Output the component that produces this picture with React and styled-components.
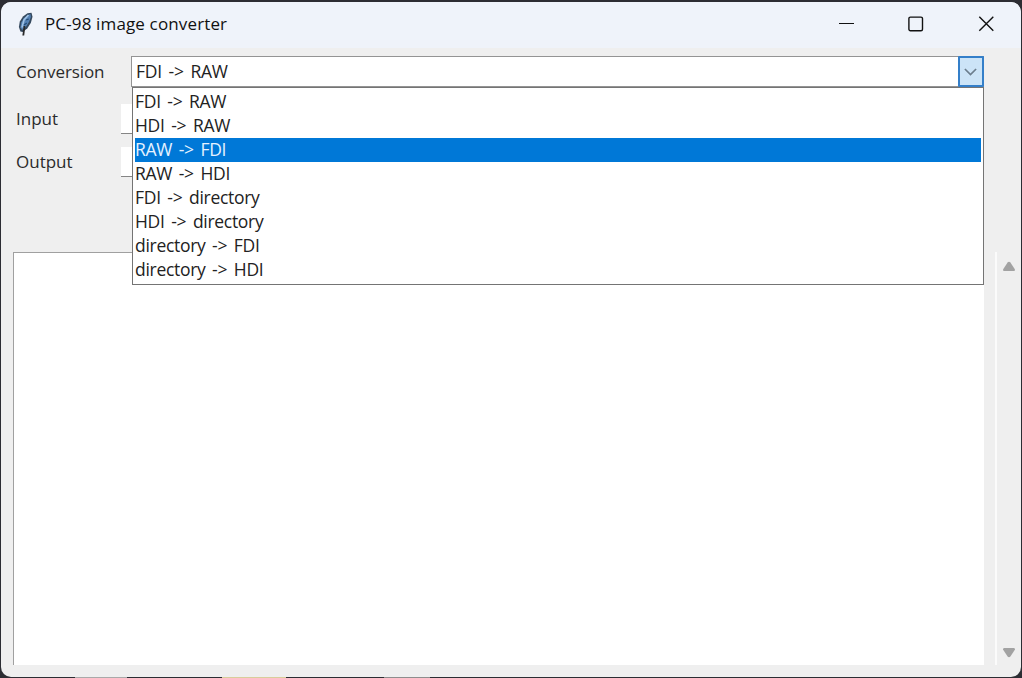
import React, { useState } from "react";
import styled, { createGlobalStyle } from "styled-components";

const GlobalStyle = createGlobalStyle`
  * {
    box-sizing: border-box;
  }

  body {
    margin: 0;
    overflow: hidden;
    background: #2c2d33;
    font-family: "Open Sans", "Noto Sans", sans-serif;
  }
`;

const Desktop = styled.div`
  width: 1022px;
  height: 678px;
  padding: 2px 1px 1px;
  background:
    linear-gradient(#a9a9a9, #a9a9a9) 75px 677px / 52px 1px no-repeat,
    linear-gradient(#d8cd9b, #d8cd9b) 222px 677px / 64px 1px no-repeat,
    linear-gradient(#8d8d8d, #8d8d8d) 384px 677px / 46px 1px no-repeat,
    #2c2d33;
`;

const Window = styled.div`
  display: flex;
  flex-direction: column;
  height: 675px;
  overflow: hidden;
  border-radius: 10px;
  background: #efefef;
`;

const TitleBar = styled.header`
  display: flex;
  align-items: center;
  height: 46px;
  padding: 0 0 2px 16px;
  background: #eff3fa;
`;

const Title = styled.div`
  flex: 1;
  margin-left: 12px;
  color: #111;
  font-size: 17px;
  line-height: 24px;
  letter-spacing: 0.14px;
  white-space: pre;
`;

const WindowButton = styled.button`
  display: flex;
  align-items: center;
  justify-content: center;
  width: 70px;
  height: 44px;
  padding: 0;
  border: 0;
  background: transparent;
`;

const Form = styled.main`
  display: flex;
  flex-direction: column;
  height: 204px;
  padding: 8px 37px 0 15px;
`;

const Row = styled.div`
  display: flex;
  align-items: center;
  height: ${(props) => props.$height}px;
  margin-bottom: ${(props) => props.$gap}px;
`;

const Label = styled.label`
  width: ${(props) => props.$width}px;
  color: #2b2b2b;
  font-size: 17px;
  line-height: 24px;
  letter-spacing: ${(props) => props.$spacing || 0}px;
`;

const Entry = styled.div`
  flex: 1;
  height: 100%;
  border-bottom: 1px solid #858585;
  background: #fff;
`;

const Combobox = styled.div`
  position: relative;
  display: flex;
  flex: 1;
  height: 31px;
  border: 1px solid #949494;
  background: #fff;
`;

const Value = styled.div`
  flex: 1;
  padding-left: 4px;
  color: #222;
  font-size: 17.5px;
  line-height: 28px;
  letter-spacing: -0.25px;
  word-spacing: 2.4px;
`;

const Arrow = styled.button`
  display: flex;
  align-items: center;
  justify-content: center;
  width: 26px;
  height: 31px;
  margin: -1px -1px 0 0;
  padding: 0;
  border: 2px solid #347fc9;
  border-radius: 1px;
  background: #cce4f7;
`;

const List = styled.ul`
  position: absolute;
  z-index: 1;
  top: 30px;
  left: 0;
  width: 852px;
  height: 198px;
  margin: 0;
  padding: 2px;
  border: 1px solid #747474;
  background: #fff;
  list-style: none;
`;

const Option = styled.li`
  height: 24px;
  color: ${(props) => (props.$active ? "#e6f2ff" : "#222")};
  background: ${(props) => (props.$active ? "#0078d7" : "transparent")};
  font-size: 17.5px;
  line-height: 23px;
  letter-spacing: -0.3px;
  word-spacing: 2.4px;
  white-space: nowrap;
`;

const Output = styled.section`
  display: flex;
  height: 413px;
  padding-left: 12px;
`;

const Log = styled.div`
  width: 971px;
  border-top: 1px solid #a0a0a0;
  border-left: 1px solid #a0a0a0;
  background: #fff;
`;

const Scrollbar = styled.div`
  display: flex;
  flex-direction: column;
  align-items: center;
  justify-content: space-between;
  width: 25px;
  margin-left: 11px;
  padding: 9px 0 7px;
  border-left: 2px solid #fbfbfb;
`;

const options = [
  "FDI -> RAW",
  "HDI -> RAW",
  "RAW -> FDI",
  "RAW -> HDI",
  "FDI -> directory",
  "HDI -> directory",
  "directory -> FDI",
  "directory -> HDI",
];

function Feather() {
  return (
    <svg width="16" height="24" viewBox="0 0 16 24">
      <path d="M14.5.8 10.5 1.2 6 4.5 2.8 9.5 1.9 15l1.5 4.4 2.4.6 4.6-3.7 3.5-5.5 1.6-6Z" fill="#34485d" />
      <path d="m13.4 2-3 1.2L6.8 6.2 4.3 10.6l-.8 4.7 1.6 2.7 4.1-3.5 2.9-4.8 1.8-4.7Z" fill="#5381b4" />
      <path d="M11.5 3 7 8l-2 7.5" fill="none" stroke="#9fc2e5" strokeWidth="1.6" />
      <path d="m9 8 2.8-1M7 13l2.8-2" stroke="#244d78" strokeWidth="1.2" />
      <path d="m7.5 14-1.2 9.5" stroke="#292929" strokeWidth="1.8" />
    </svg>
  );
}

export default function App() {
  const [active, setActive] = useState(2);

  return (
    <>
      <GlobalStyle />
      <Desktop>
        <Window>
          <TitleBar>
            <Feather />
            <Title>PC-98 image converter</Title>
            <WindowButton aria-label="Minimize">
              <svg width="16" height="16" viewBox="0 0 16 16">
                <path d="M1 7.5h15" stroke="#111" />
              </svg>
            </WindowButton>
            <WindowButton aria-label="Maximize">
              <svg width="16" height="16" viewBox="0 0 16 16" fill="none">
                <rect x=".9" y="1.1" width="13.6" height="13.6" rx="1.5" stroke="#111" strokeWidth="1.4" />
              </svg>
            </WindowButton>
            <WindowButton aria-label="Close">
              <svg width="16" height="16" viewBox="0 0 16 16">
                <path d="m1.3.8 14 14M15.3.8l-14 14" stroke="#111" strokeWidth="1.4" />
              </svg>
            </WindowButton>
          </TitleBar>

          <Form>
            <Row $height={31} $gap={17}>
              <Label $width={115} $spacing={-0.1}>Conversion</Label>
              <Combobox>
                <Value>FDI -&gt; RAW</Value>
                <Arrow aria-label="Show conversions">
                  <svg width="14" height="8" viewBox="0 0 14 8">
                    <path d="m.9 1 5.6 5.5L12.1 1" fill="none" stroke="#6c7e8d" strokeWidth="1.7" />
                  </svg>
                </Arrow>
                <List>
                  {options.map((option, i) => (
                    <Option
                      key={option}
                      $active={i === active}
                      onMouseEnter={() => setActive(i)}
                    >
                      {option}
                    </Option>
                  ))}
                </List>
              </Combobox>
            </Row>
            <Row $height={30} $gap={13}>
              <Label $width={105}>Input</Label>
              <Entry />
            </Row>
            <Row $height={30} $gap={0}>
              <Label $width={105}>Output</Label>
              <Entry />
            </Row>
          </Form>

          <Output>
            <Log />
            <Scrollbar>
              <svg width="12" height="10" viewBox="0 0 12 10">
                <path d="M4.6 1.5Q6 0 7.4 1.5L12 8.5Q12 10 11 10H1Q0 10 0 8.5Z" fill="#a2a2a2" />
              </svg>
              <svg width="12" height="10" viewBox="0 0 12 10">
                <path d="M4.6 8.5Q6 10 7.4 8.5L12 1.5Q12 0 11 0H1Q0 0 0 1.5Z" fill="#a2a2a2" />
              </svg>
            </Scrollbar>
          </Output>
        </Window>
      </Desktop>
    </>
  );
}
